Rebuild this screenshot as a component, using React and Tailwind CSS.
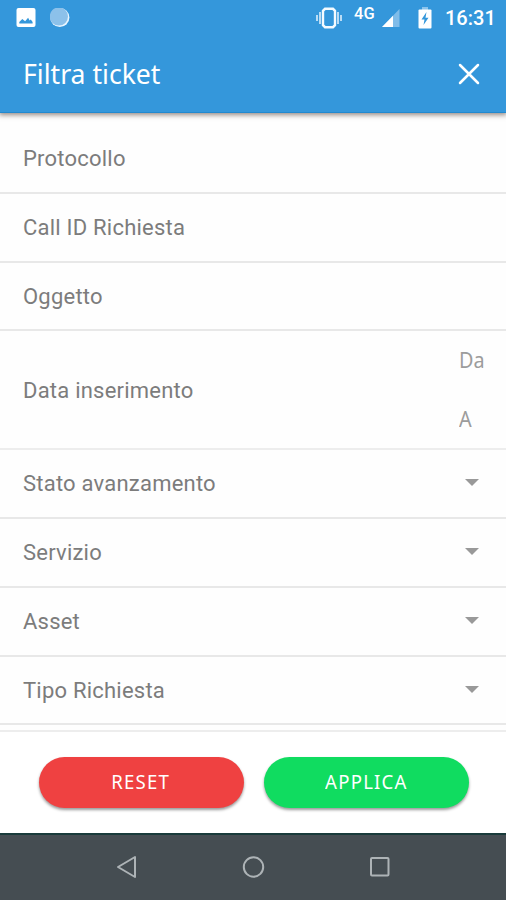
import React from "react";

function StatusBar() {
  return (
    <div className="flex h-9 items-center text-white">
      <svg className="ml-4 h-5 w-5" viewBox="0 0 20 20">
        <rect x="0.5" y="0" width="19" height="19" rx="2" fill="#fff" />
        <path d="M3.3 15.4V14l3-3 2.800 2.300 3-3.600 1.500 2.800 1.200-.9 1.800 2.400v1.400z" fill="#3497db" />
      </svg>
      <svg className="ml-3.5 h-5 w-5" viewBox="0 0 20 20">
        <circle cx="9.8" cy="9.5" r="9.6" fill="#e8f5ff" />
        <circle cx="8.900" cy="8.500" r="9.100" fill="#8cc1ea" />
      </svg>
      <svg className="ml-auto h-[22px] w-[26px]" viewBox="0 0 26 22" fill="none">
        <path d="M1 8v6M4 5v12M22 5v12M25 8v6" stroke="#b9dcf5" strokeWidth="2" />
        <path d="M9 1.800h8l2 2v14.400l-2 2H9l-2-2V3.800z" stroke="#f4fbff" strokeWidth="2.400" />
      </svg>
      <span className="mb-2 ml-3 w-[22px] whitespace-nowrap text-[16.500px] leading-5 font-medium">4G</span>
      <svg className="ml-[6px] h-[18px] w-[18px]" viewBox="0 0 18 18">
        <path d="M0 18 17.500 0v18z" fill="#7fbce9" />
        <path d="M0 18 11 6.700V18z" fill="#fff" />
      </svg>
      <svg className="ml-[18px] h-[22px] w-[14px]" viewBox="0 0 14 22">
        <path d="M4 0h6v3H4z" fill="#8cc4ec" />
        <rect x="0.500" y="2.500" width="13" height="19" rx="1" fill="#fff" />
        <path d="M8.500 5 3.500 12.500h3L5.500 18l5-7.300h-3z" fill="#3497db" />
      </svg>
      <span className="mr-[11px] ml-[13px] w-[50px] whitespace-nowrap text-right text-[20px] leading-6 font-medium">16:31</span>
    </div>
  );
}

function Header() {
  return (
    <header className="relative z-10 h-[113px] shrink-0 border-b border-[#2289cf] bg-[#3497db] shadow-[0_1px_5px_1px_rgba(80,60,50,0.6)]">
      <StatusBar />
      <div className="flex h-[76px] items-center justify-between pr-6 pl-[23px] text-white">
        <h1 className="origin-left scale-x-[0.985] font-['Noto_Sans','Open_Sans',sans-serif] text-[27px] leading-8">Filtra ticket</h1>
        <svg className="h-[26px] w-[26px]" viewBox="0 0 26 26" fill="none" stroke="#fff" strokeWidth="2.500" strokeLinecap="round">
          <path d="m4 4 18 18M22 4 4 22" />
        </svg>
      </div>
    </header>
  );
}

function Row({ label, select, className = "h-[69px]" }) {
  return (
    <div className={`flex shrink-0 items-center justify-between border-b-2 border-[#e8e8e8] pr-[27px] pl-[23px] ${className}`}>
      <span className="text-[22px] leading-7 tracking-[0.22px] text-[#7c7c7c]">{label}</span>
      {select && (
        <svg className="mb-[3px] h-[7px] w-[14px]" viewBox="0 0 14 7">
          <path d="M0 0h14L7 7z" fill="#999" />
        </svg>
      )}
    </div>
  );
}

function DateRow() {
  return (
    <div className="flex h-[119px] shrink-0 items-center justify-between border-b-2 border-[#ededed] pl-[23px]">
      <span className="pt-0.5 text-[22px] leading-7 tracking-[0.22px] text-[#7c7c7c]">Data inserimento</span>
      <div className="flex w-[47.500px] flex-col gap-[31px] pb-[3px] font-['Noto_Sans','Open_Sans',sans-serif] text-[22px] leading-7 text-[#9c9c9c]">
        <span className="origin-left scale-x-[0.9]">Da</span>
        <span className="origin-left scale-x-[0.9]">A</span>
      </div>
    </div>
  );
}

function ActionButton({ children, className }) {
  return (
    <button className={`flex h-[51px] w-[205px] items-center justify-center rounded-full pb-px font-['Noto_Sans','Open_Sans',sans-serif] text-[20px] text-white shadow-[0_2px_3px_rgba(0,0,0,0.4)] ${className}`}>
      <span className="scale-x-[0.93] tracking-[1.300px]">{children}</span>
    </button>
  );
}

function NavBar() {
  return (
    <nav className="flex h-[67px] shrink-0 items-center justify-center gap-[102px] border-t-2 border-[#193b3b] bg-[#454d52] pb-0.5">
      <svg className="h-6 w-6" viewBox="0 0 24 24" fill="none" stroke="#adb3b6" strokeWidth="2" strokeLinejoin="round">
        <path d="M3 12 20 2v20z" />
      </svg>
      <svg className="h-6 w-6" viewBox="0 0 24 24" fill="none" stroke="#adb3b6" strokeWidth="2">
        <circle cx="12.500" cy="12" r="9.700" />
      </svg>
      <svg className="h-6 w-6" viewBox="0 0 24 24" fill="none" stroke="#adb3b6" strokeWidth="2">
        <rect x="4" y="3" width="17.500" height="17.500" rx="1" />
      </svg>
    </nav>
  );
}

export default function App() {
  return (
    <div className="flex h-[900px] w-[506px] flex-col overflow-hidden bg-[#fefefe] font-['Roboto',sans-serif]">
      <Header />
      <main className="flex h-[617px] shrink-0 flex-col pt-3">
        <Row label="Protocollo" />
        <Row label="Call ID Richiesta" />
        <Row label="Oggetto" className="h-[68px] pt-0.5" />
        <DateRow />
        <Row label="Stato avanzamento" select className="h-[69px] pt-px" />
        <Row label="Servizio" select className="h-[69px] pt-px" />
        <Row label="Asset" select className="h-[69px] pt-px" />
        <Row label="Tipo Richiesta" select className="h-[68px] pt-px" />
      </main>
      <footer className="flex h-[103px] shrink-0 justify-center gap-5 border-t-2 border-[#ededed] bg-white pt-[25px] pl-px">
        <ActionButton className="bg-[#ef4141]">RESET</ActionButton>
        <ActionButton className="bg-[#10dc60]">APPLICA</ActionButton>
      </footer>
      <NavBar />
    </div>
  );
}
